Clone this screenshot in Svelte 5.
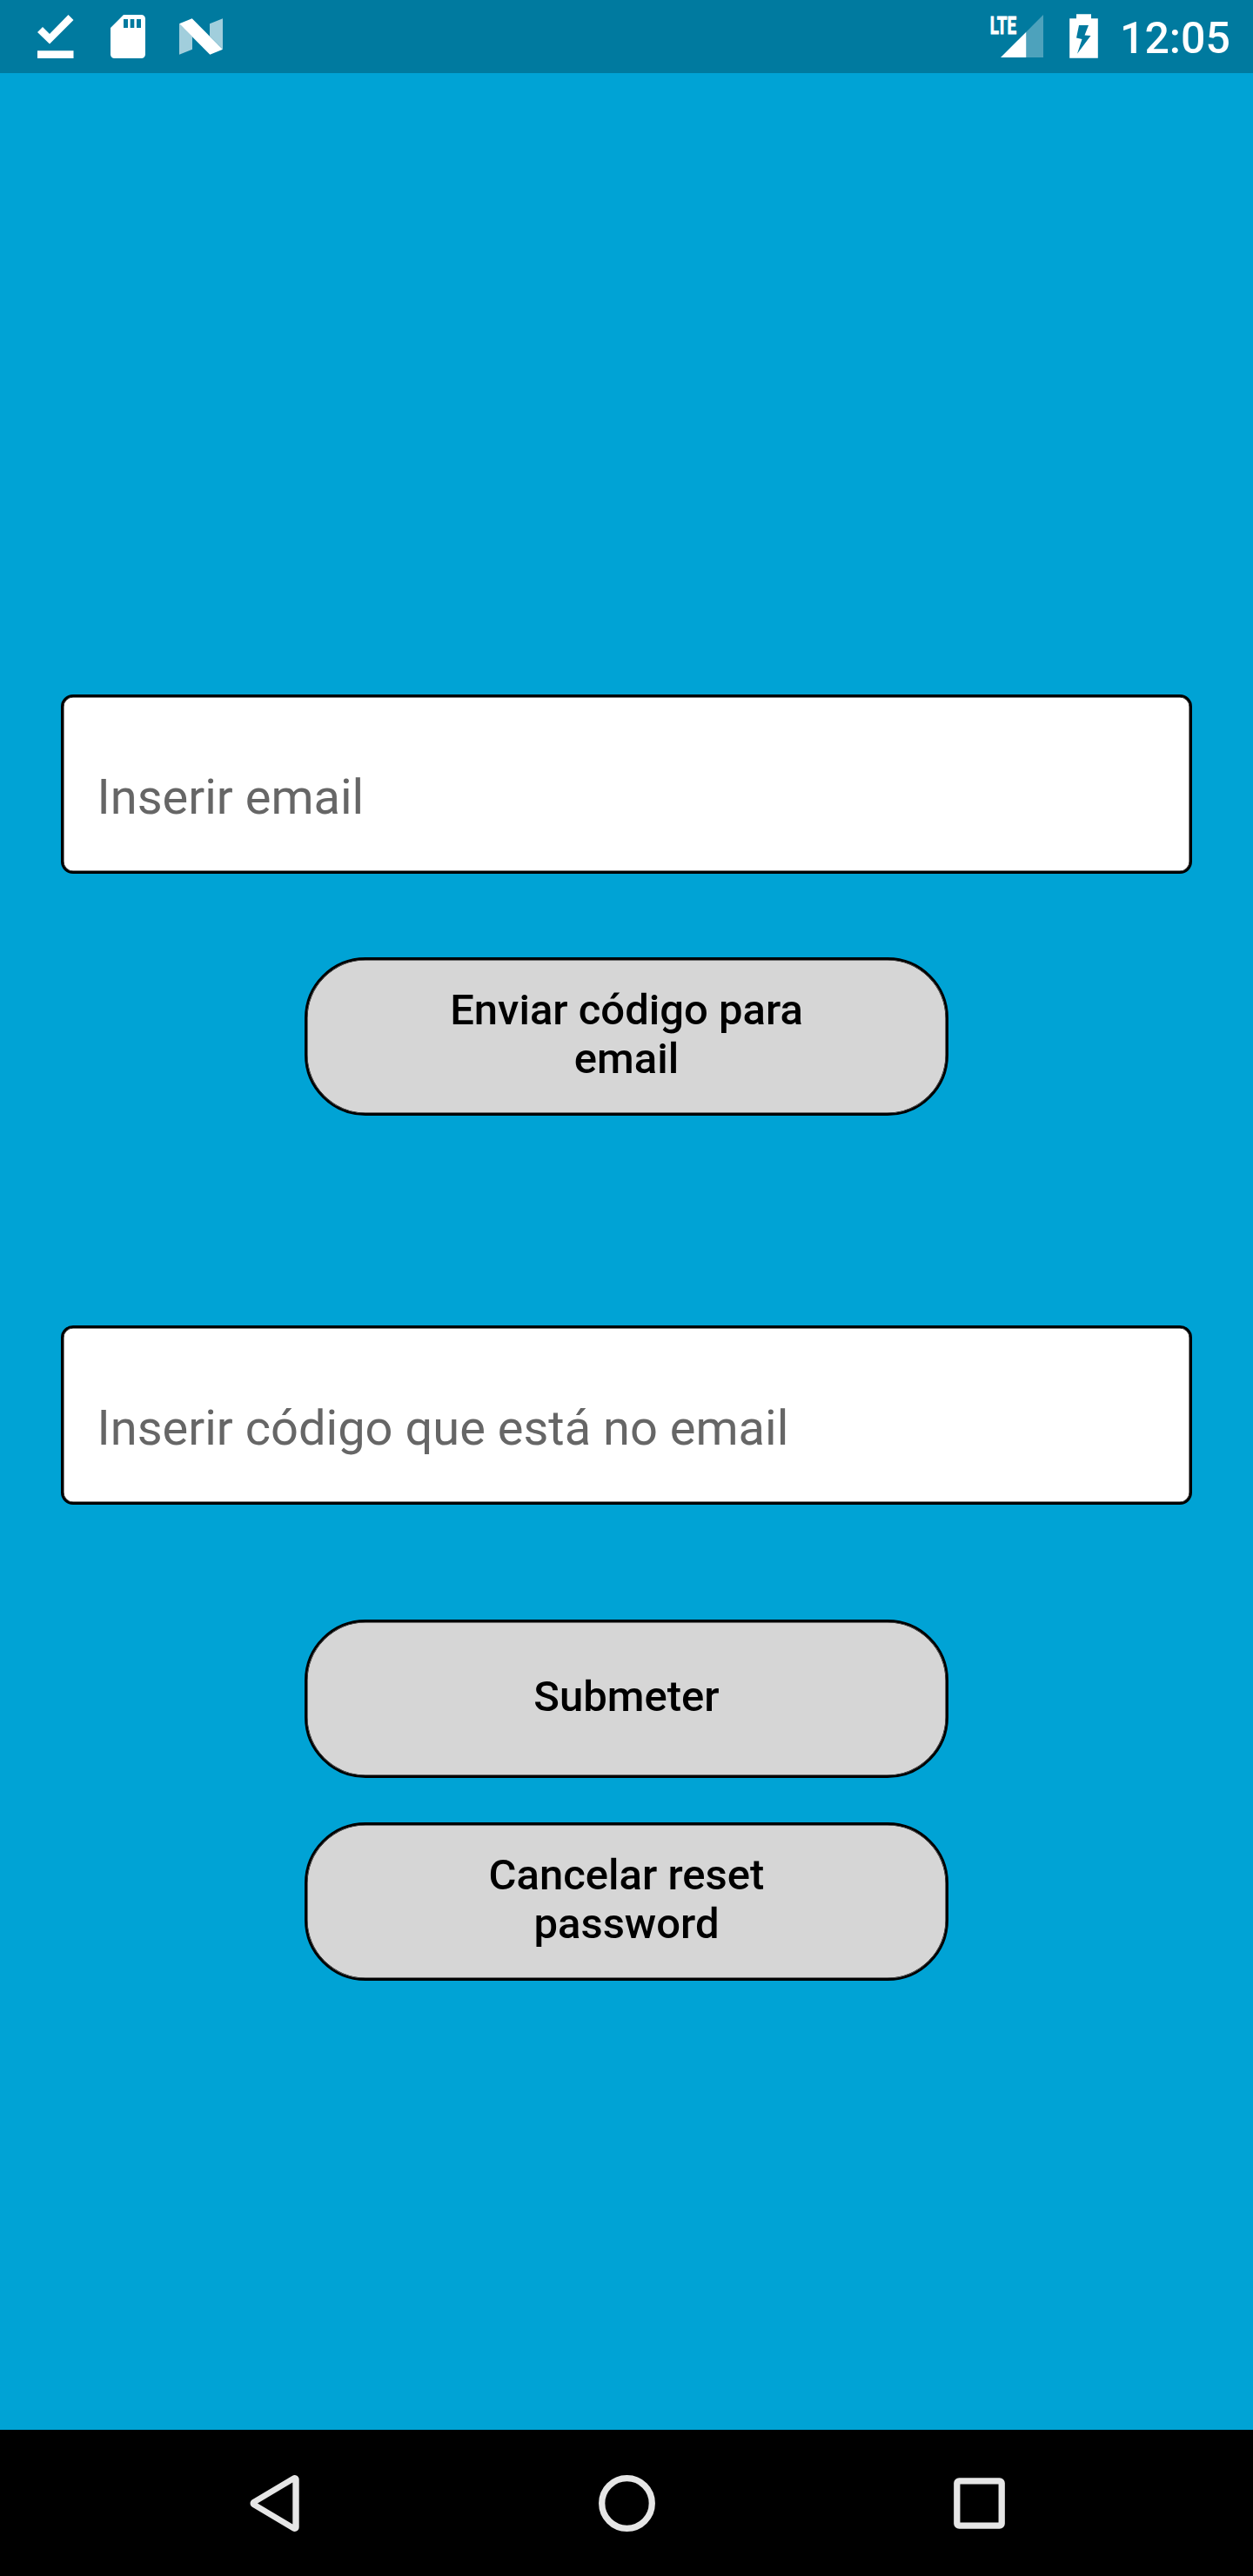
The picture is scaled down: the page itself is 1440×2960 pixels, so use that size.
<script>
  const emailHint = 'Inserir email';
  const codeHint = 'Inserir código que está no email';
</script>

<div class="screen">
  <header class="status">
    <svg class="notifications" width="300" height="84" viewBox="0 0 300 84" fill="#fff">
      <path d="M43 37l6-6 8 8 21.500-22 6 6L57 50.500zM43 58.300h41.500V67H43z" />
      <path fill-rule="evenodd" d="M142 17h20.500a4.500 4.500 0 0 1 4.500 4.500v41a4.500 4.500 0 0 1-4.500 4.500h-31a4.500 4.500 0 0 1-4.500-4.500V32zM142 22v10h5V22zM149.700 22v10h4.600V22zM157 22v10h5V22z" />
      <path opacity=".63" d="M206 27.300L221 42.300V56.700L206 62.700zM241 27.300L256 21.300V56.500L241 41.500z" />
      <path d="M206 27.300L220.700 21.300 256 56.700 241.300 62.700z" />
    </svg>
    <div class="system">
      <svg width="140" height="84" viewBox="1130 0 140 84" fill="#fff">
        <text class="lte" transform="translate(1137.700 38.600) scale(.66 1)">LTE</text>
        <path d="M1150 66L1179.300 36.700V66z" />
        <path opacity=".3" d="M1179.300 36.700L1199 17V66H1179.300z" />
        <path fill-rule="evenodd" d="M1237 16.300h17V21.300h7.800V66.700h-32.600V21.300h7.800zM1240 29L1237 43.500 1243.500 45 1238 61.700 1253.500 41 1246.500 40.500 1251 29z" />
      </svg>
      <time class="clock">12:05</time>
    </div>
  </header>

  <main>
    <div class="field" role="textbox" tabindex="0" aria-label={emailHint}><span>{emailHint}</span></div>
    <button class="send">Enviar código para<br />email</button>
    <div class="field code" role="textbox" tabindex="0" aria-label={codeHint}><span>{codeHint}</span></div>
    <button class="submit">Submeter</button>
    <button class="cancel">Cancelar reset<br />password</button>
  </main>

  <nav>
    <svg width="90" height="90" viewBox="0 0 90 90">
      <path class="back" d="M22.500 45.500L68.700 18V73z" />
      <path class="hollow" d="M26 45.500L66.300 21.500V69.500z" />
    </svg>
    <svg width="90" height="90" viewBox="0 0 90 90"><circle cx="45.500" cy="45.500" r="28.800" /></svg>
    <svg width="90" height="90" viewBox="0 0 90 90"><rect x="19.800" y="19.800" width="51.400" height="51.400" rx="2.500" /></svg>
  </nav>
</div>

<style>
  :global(body) {
    margin: 0;
  }

  .screen {
    display: flex;
    flex-direction: column;
    width: 1440px;
    height: 2960px;
    background: #00a3d5;
    font-family: Roboto, 'Liberation Sans', sans-serif;
  }

  .status {
    display: flex;
    justify-content: space-between;
    height: 84px;
    background: #007a9f;
    color: #fff;
  }

  svg {
    display: block;
    flex: none;
  }

  .system {
    display: flex;
    width: 310px;
  }

  .lte {
    font-size: 28.5px;
    font-weight: 700;
    stroke: #fff;
    stroke-width: 0.9;
  }

  .clock {
    margin-left: 17px;
    font-size: 50px;
    font-weight: 500;
    line-height: 89px;
  }

  main {
    display: flex;
    flex: 1;
    flex-direction: column;
    align-items: center;
    padding-top: 714px;
  }

  .field {
    box-sizing: border-box;
    flex: none;
    width: 1300px;
    height: 206px;
    padding: 79px 38.500px 0;
    border: 3px solid #000;
    border-radius: 14px;
    background: #fff;
    box-shadow: inset 0 0 0 0.5px #000;
    color: #666;
    font-size: 56px;
    line-height: 72px;
  }

  button {
    display: flex;
    box-sizing: border-box;
    flex: none;
    align-items: center;
    justify-content: center;
    width: 740px;
    height: 182px;
    margin: 0;
    padding: 0 0 5px;
    border: 3px solid #000;
    border-radius: 70px;
    background: #d6d6d6;
    box-shadow: inset 0 0 0 0.5px #000;
    color: #000;
    font: 500 49px/56px Roboto, 'Liberation Sans', sans-serif;
    text-align: center;
  }

  .send {
    margin-top: 96px;
  }

  .code {
    margin-top: 241px;
  }

  .submit {
    margin-top: 132px;
  }

  .cancel {
    margin-top: 51px;
  }

  nav {
    display: flex;
    box-sizing: border-box;
    align-items: center;
    justify-content: space-between;
    height: 168px;
    padding: 0 270px;
    background: #000;
  }

  nav svg {
    fill: none;
    stroke: #e6e6e6;
    stroke-width: 7.3;
    stroke-linejoin: round;
  }

  .back {
    fill: #e6e6e6;
    stroke-width: 10;
  }

  .hollow {
    fill: #000;
    stroke: none;
  }
</style>
